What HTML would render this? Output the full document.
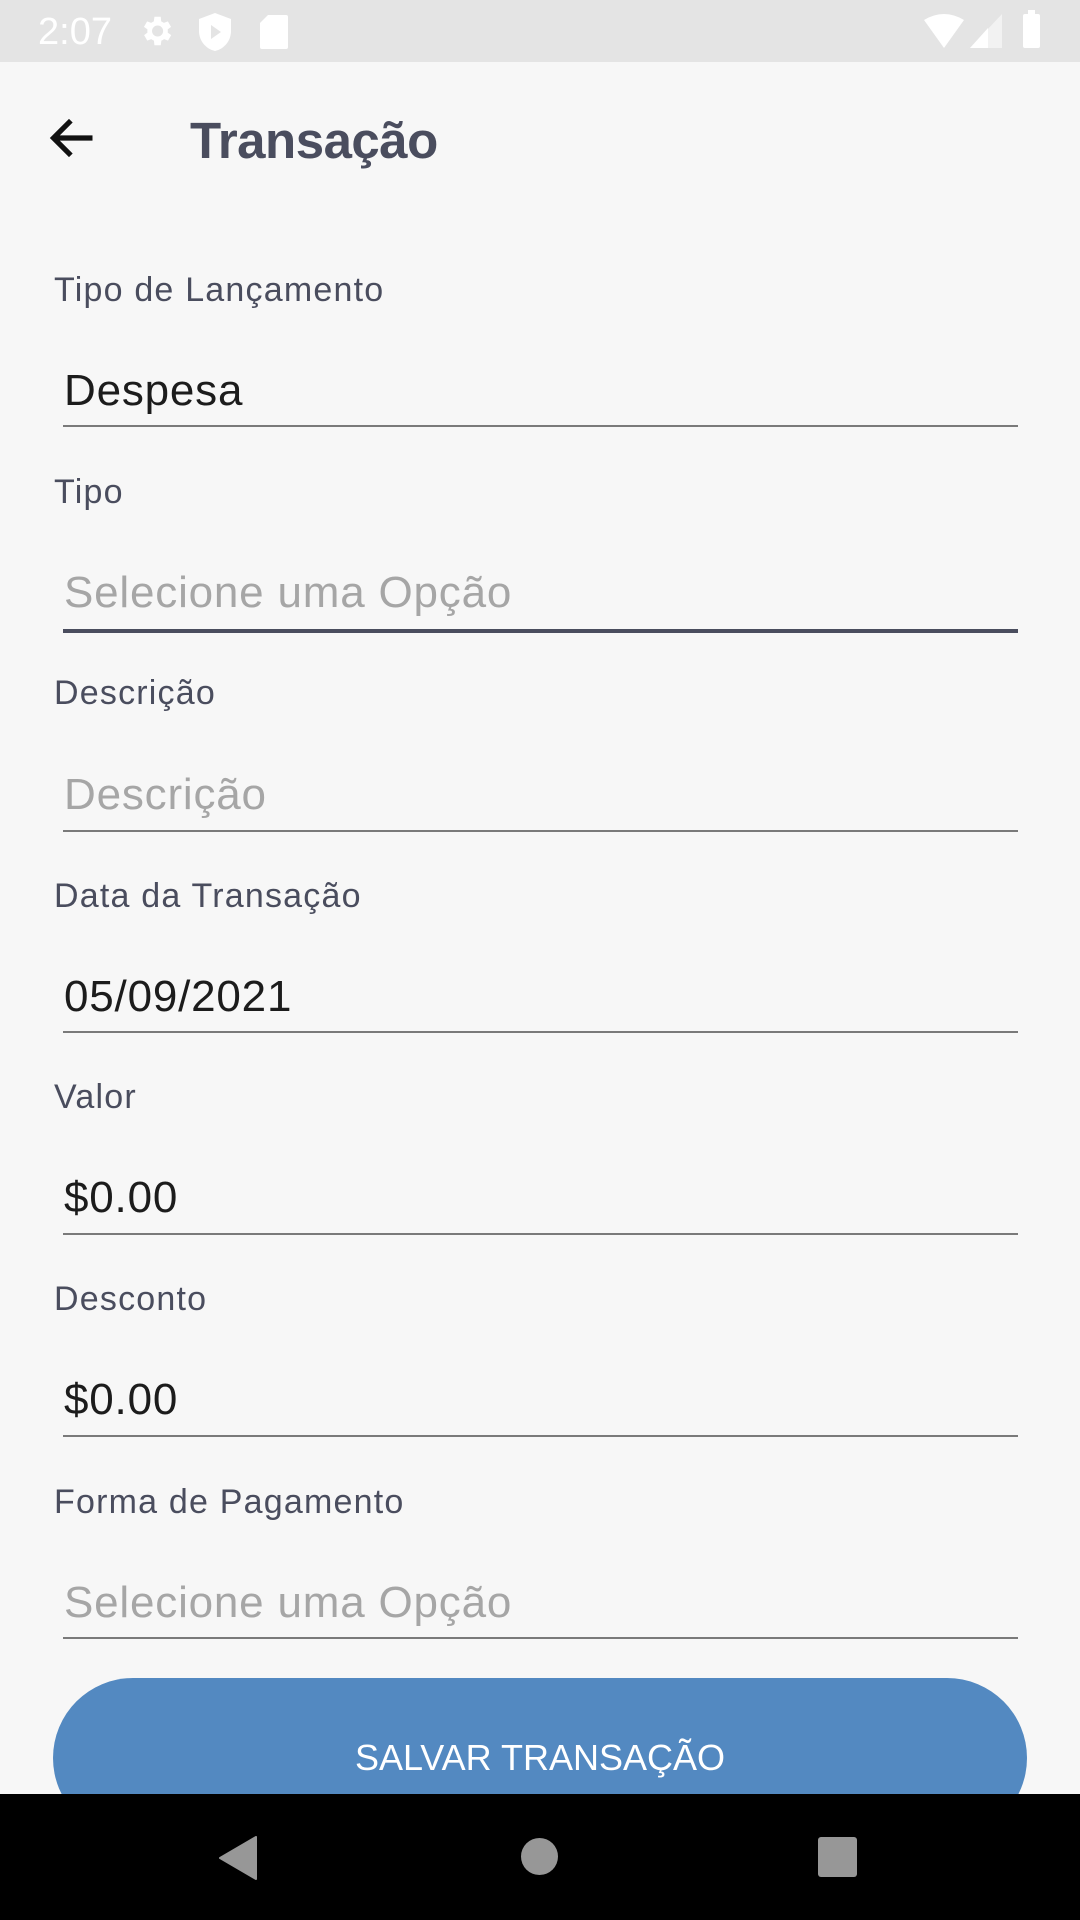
<!DOCTYPE html>
<html><head><meta charset="utf-8"><style>
*{margin:0;padding:0;box-sizing:border-box}
body{width:1080px;height:1920px;background:#f7f7f7;position:relative;overflow:hidden;font-family:"Liberation Sans",sans-serif}
.sb{position:absolute;left:0;top:0;width:1080px;height:62px;background:#e4e4e4}
.abs{position:absolute}
.lbl{position:absolute;left:54px;font-size:34px;color:#4a4d5e;line-height:1;letter-spacing:1.2px}
.val{position:absolute;left:64px;font-size:44px;color:#1c1c1c;line-height:1;letter-spacing:0.8px}
.ph{color:#a6a6a6}
.ln{position:absolute;left:63px;width:955px;height:2px;background:#7a7a7a}
.nav{position:absolute;left:0;top:1794px;width:1080px;height:126px;background:#000}
</style></head><body>
<div class="sb">
<div class="abs" style="left:38px;top:11px;font-size:38px;color:#fff">2:07</div>
<svg class="abs" style="left:137px;top:12px" width="38" height="38" viewBox="0 0 24 24"><path fill="#fff" d="M19.4 13a7.5 7.5 0 000-2l2.1-1.6-2-3.5-2.5 1a7 7 0 00-1.7-1L15 3h-4l-.4 2.9a7 7 0 00-1.7 1l-2.5-1-2 3.5L6.6 11a7.5 7.5 0 000 2l-2.1 1.6 2 3.5 2.5-1a7 7 0 001.7 1L11 21h4l.4-2.9a7 7 0 001.7-1l2.5 1 2-3.5zM13 15.5a3.5 3.5 0 110-7 3.5 3.5 0 010 7z"/></svg>
<svg class="abs" style="left:199px;top:13px" width="32" height="38" viewBox="0 0 16 19"><path fill="#fff" d="M8 0L0 3v6c0 5 3.5 9 8 10 4.5-1 8-5 8-10V3z"/><path fill="#e4e4e4" d="M6 6v7l5-3.5z"/></svg>
<svg class="abs" style="left:260px;top:15px" width="28" height="34" viewBox="0 0 14 17"><path fill="#fff" d="M4 0h9a1 1 0 011 1v15a1 1 0 01-1 1H1a1 1 0 01-1-1V4z"/></svg>
<svg class="abs" style="left:924px;top:14px" width="40" height="34" viewBox="0 0 20 17"><path fill="#fff" d="M0 3Q10-3 20 3L10 17z"/></svg>
<svg class="abs" style="left:970px;top:14px" width="32" height="34" viewBox="0 0 16 17"><path fill="#f2f2f2" d="M16 0v17H0z"/><path fill="#fff" d="M9 7v10H0z"/></svg>
<div class="abs" style="left:1023px;top:14px;width:17px;height:34px;background:#fff;border-radius:2px"></div>
<div class="abs" style="left:1028px;top:10px;width:7px;height:5px;background:#fff"></div>
</div>
<svg class="abs" style="left:46px;top:112px" width="54" height="52" viewBox="0 0 24 24"><path d="M21 12H4M11 4l-8 8 8 8" stroke="#111" stroke-width="2.4" fill="none"/></svg>
<div class="abs" style="left:190px;top:111px;font-size:51px;font-weight:bold;color:#4a4d5e;letter-spacing:-0.5px">Transação</div>

<div class="lbl" style="top:273px">Tipo de Lançamento</div>
<div class="val" style="top:369px">Despesa</div>
<div class="ln" style="top:425px"></div>

<div class="lbl" style="top:475px">Tipo</div>
<div class="val ph" style="top:571px">Selecione uma Opção</div>
<div class="ln" style="top:629px;height:4px;background:#4a4d5e"></div>

<div class="lbl" style="top:676px">Descrição</div>
<div class="val ph" style="top:773px">Descrição</div>
<div class="ln" style="top:830px"></div>

<div class="lbl" style="top:879px">Data da Transação</div>
<div class="val" style="top:975px">05/09/2021</div>
<div class="ln" style="top:1031px"></div>

<div class="lbl" style="top:1080px">Valor</div>
<div class="val" style="top:1176px">$0.00</div>
<div class="ln" style="top:1233px"></div>

<div class="lbl" style="top:1282px">Desconto</div>
<div class="val" style="top:1378px">$0.00</div>
<div class="ln" style="top:1435px"></div>

<div class="lbl" style="top:1485px">Forma de Pagamento</div>
<div class="val ph" style="top:1581px">Selecione uma Opção</div>
<div class="ln" style="top:1637px"></div>

<div class="abs" style="left:53px;top:1678px;width:974px;height:160px;background:#5389c1;border-radius:80px"></div>
<div class="abs" style="left:53px;width:974px;top:1737px;text-align:center;color:#fff;font-size:36px">SALVAR TRANSAÇÃO</div>

<div class="nav">
<svg class="abs" style="left:219px;top:42px" width="38" height="44" viewBox="0 0 38 44"><path fill="#979797" d="M37 1v42L1 22z" stroke="#979797" stroke-linejoin="round" stroke-width="2"/></svg>
<div class="abs" style="left:521px;top:44px;width:37px;height:37px;border-radius:50%;background:#979797"></div>
<div class="abs" style="left:818px;top:43px;width:39px;height:40px;border-radius:3px;background:#979797"></div>
</div>
</body></html>
